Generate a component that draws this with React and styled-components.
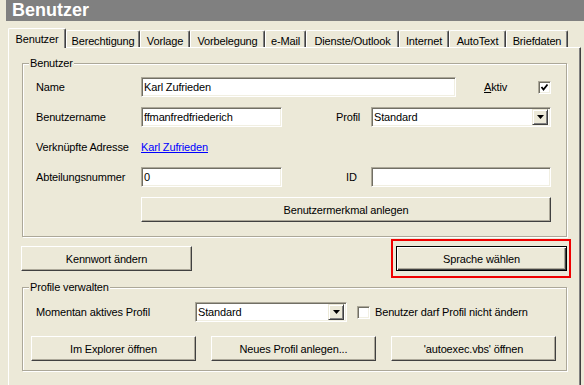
import React from 'react';
import styled, { createGlobalStyle, css } from 'styled-components';

const GlobalStyle = createGlobalStyle`
    html, body {
        margin: 0;
        padding: 0;
        background: #ece9d8;
        overflow: hidden;
    }
    body {
        font-family: "Liberation Sans", Arial, sans-serif;
        font-size: 11px;
        letter-spacing: -0.15px;
        color: #000;
    }
`;

const Screen = styled.div`
    width: 584px;
    height: 385px;
    overflow: hidden;
    background: #ece9d8;
`;

const TitleBar = styled.h1`
    margin: 0 0 0 6px;
    height: 21px;
    padding-left: 6px;
    background: #808080;
    color: #fff;
    font-size: 18px;
    font-weight: bold;
    letter-spacing: 0;
    line-height: 21px;
`;

const TabStrip = styled.div`
    display: flex;
    align-items: flex-end;
    height: 19px;
    margin: 7px 0 0 8px;
    position: relative;
    z-index: 1;
`;

const Tab = styled.div`
    box-sizing: border-box;
    width: ${ p => p.$w }px;
    height: ${ p => p.$active ? 20 : 17 }px;
    margin-bottom: ${ p => p.$active ? -1 : 0 }px;
    padding-top: ${ p => p.$active ? 0 : 3 }px;
    background: #ece9d8;
    border-top: 1px solid #fff;
    border-left: 1px solid #fff;
    border-right: 1px solid #404040;
    border-radius: 2px 2px 0 0;
    box-shadow: inset -1px 0 #808080;
    display: flex;
    align-items: center;
    justify-content: center;
    white-space: nowrap;
`;

const Panel = styled.div`
    box-sizing: border-box;
    width: 573px;
    height: 345px;
    margin-left: 8px;
    padding: 8px 0 0 13px;
    border-top: 1px solid #fff;
    border-left: 1px solid #fff;
    border-right: 1px solid #404040;
    box-shadow: inset -1px 0 #808080;
`;

const Group = styled.fieldset`
    box-sizing: border-box;
    width: 545px;
    min-width: 0;
    margin: ${ p => p.$margin || 0 };
    padding: ${ p => p.$pad };
    border: 1px solid #aca899;
    box-shadow: inset 1px 1px #fff, 1px 1px #fff;
`;

const Legend = styled.legend`
    margin-left: ${ p => p.$shift }px;
    padding: 0 1px;
    line-height: 14px;
    background: #ece9d8;
`;

const Rows = styled.div`
    display: flex;
    flex-direction: column;
    gap: ${ p => p.$gap }px;
`;

const Row = styled.div`
    display: flex;
    align-items: center;
    height: ${ p => p.$h || 20 }px;
    margin-left: ${ p => p.$indent || 0 }px;
    gap: ${ p => p.$gap || 0 }px;
`;

const Label = styled.span`
    box-sizing: border-box;
    flex: none;
    width: ${ p => p.$w }px;
    padding-left: ${ p => p.$indent || 0 }px;
    white-space: nowrap;
`;

const sunken = css`
    box-sizing: border-box;
    height: 20px;
    background: #fff;
    border: 1px solid;
    border-color: #aca899 #fff #fff #aca899;
    box-shadow: inset 1px 1px #716f64, inset -1px -1px #f1efe2;
`;

const TextBox = styled.div`
    ${ sunken };
    flex: none;
    width: ${ p => p.$w }px;
    padding-left: 2px;
    display: flex;
    align-items: center;
    white-space: nowrap;
`;

const Combo = styled(TextBox)`
    padding-right: 2px;
    justify-content: space-between;
`;

const ComboButton = styled.span`
    box-sizing: border-box;
    width: 16px;
    height: 16px;
    background: #ece9d8;
    border: 1px solid;
    border-color: #ece9d8 #404040 #404040 #ece9d8;
    box-shadow: inset 1px 1px #fff, inset -1px -1px #808080;
    display: flex;
    align-items: center;
    justify-content: center;
`;

const CheckBox = styled.span`
    ${ sunken };
    flex: none;
    width: 13px;
    height: 13px;
    display: flex;
    align-items: center;
    justify-content: center;
`;

const Link = styled.a`
    color: #0000ff;
    text-decoration: underline;
    cursor: pointer;
`;

const Button = styled.button`
    box-sizing: border-box;
    flex: none;
    width: ${ p => p.$w }px;
    height: 25px;
    margin: 0;
    padding: 0;
    background: #ece9d8;
    color: #000;
    font: inherit;
    letter-spacing: inherit;
    border: 1px solid;
    border-color: #fff #404040 #404040 #fff;
    box-shadow: inset -1px -1px #aca899;

    ${ p => p.$default && css`
        border-color: #000;
        box-shadow: inset 1px 1px #fff, inset -1px -1px #404040, inset -2px -2px #aca899;
    ` }
`;

const ActionRow = styled.div`
    display: flex;
    align-items: center;
    justify-content: space-between;
    width: 550px;
    margin: 2px 0 0 -1px;
`;

const Highlight = styled.div`
    border: 2px solid #f00000;
    padding: 5px 2px 5px 3px;
    display: flex;
`;

const Arrow = () => (
    <svg width="7" height="4" viewBox="0 0 7 4">
        <polygon points="0,0 7,0 3.5,4" fill="#000" />
    </svg>
);

const Tick = () => (
    <svg width="9" height="9" viewBox="0 0 9 9">
        <polyline points="1.5,4 3.5,6.5 7.5,1.5" fill="none" stroke="#000" strokeWidth="1.8" />
    </svg>
);

const tabs = [
    ['Benutzer', 58],
    ['Berechtigung', 74],
    ['Vorlage', 50],
    ['Vorbelegung', 75],
    ['e-Mail', 41],
    ['Dienste/Outlook', 93],
    ['Internet', 50],
    ['AutoText', 57],
    ['Briefdaten', 62],
];

const App = () => (
    <Screen>
        <GlobalStyle />
        <TitleBar>Benutzer</TitleBar>
        <TabStrip>
            { tabs.map(([name, w], i) => (
                <Tab key={ name } $w={ w } $active={ i === 0 }>{ name }</Tab>
            )) }
        </TabStrip>
        <Panel>
            <Group $pad="7px 0 14px 13px">
                <Legend $shift={ -7 }>Benutzer</Legend>
                <Rows $gap={ 10 }>
                    <Row>
                        <Label $w={ 105 }>Name</Label>
                        <TextBox $w={ 315 }>Karl Zufrieden</TextBox>
                        <Label $w={ 82 } $indent={ 28 }><u>A</u>ktiv</Label>
                        <CheckBox><Tick /></CheckBox>
                    </Row>
                    <Row>
                        <Label $w={ 105 }>Benutzername</Label>
                        <TextBox $w={ 141 }>ffmanfredfriederich</TextBox>
                        <Label $w={ 89 } $indent={ 54 }>Profil</Label>
                        <Combo $w={ 180 }>
                            Standard
                            <ComboButton><Arrow /></ComboButton>
                        </Combo>
                    </Row>
                    <Row>
                        <Label $w={ 105 }>Verknüpfte Adresse</Label>
                        <Link>Karl Zufrieden</Link>
                    </Row>
                    <Row>
                        <Label $w={ 105 }>Abteilungsnummer</Label>
                        <TextBox $w={ 141 }>0</TextBox>
                        <Label $w={ 89 } $indent={ 64 }>ID</Label>
                        <TextBox $w={ 180 } />
                    </Row>
                    <Row $h={ 25 } $indent={ 105 }>
                        <Button $w={ 410 }>Benutzermerkmal anlegen</Button>
                    </Row>
                </Rows>
            </Group>

            <ActionRow>
                <Button $w={ 171 }>Kennwort ändern</Button>
                <Highlight>
                    <Button $w={ 171 } $default>Sprache wählen</Button>
                </Highlight>
            </ActionRow>

            <Group $margin="2px 0 0 0" $pad="8px 0 9px 8px">
                <Legend $shift={ -2 }>Profile verwalten</Legend>
                <Rows $gap={ 14 }>
                    <Row $indent={ 5 }>
                        <Label $w={ 159 }>Momentan aktives Profil</Label>
                        <Combo $w={ 152 }>
                            Standard
                            <ComboButton><Arrow /></ComboButton>
                        </Combo>
                        <Row $gap={ 5 } $indent={ 10 }>
                            <CheckBox />
                            <span>Benutzer darf Profil nicht ändern</span>
                        </Row>
                    </Row>
                    <Row $h={ 25 } $gap={ 15 }>
                        <Button $w={ 165 }>Im Explorer öffnen</Button>
                        <Button $w={ 165 }>Neues Profil anlegen...</Button>
                        <Button $w={ 165 }>'autoexec.vbs' öffnen</Button>
                    </Row>
                </Rows>
            </Group>
        </Panel>
    </Screen>
);

export default App;
